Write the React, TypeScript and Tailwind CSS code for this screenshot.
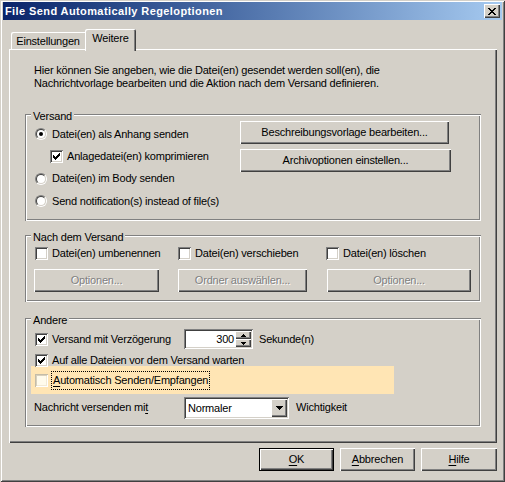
import type { ReactNode } from "react";

const RAISED =
  "shadow-[inset_1px_1px_0_#ffffff,inset_-1px_-1px_0_#404040,inset_-2px_-2px_0_#808080]";
const SUNKEN =
  "shadow-[inset_1px_1px_0_#808080,inset_-1px_-1px_0_#ffffff,inset_2px_2px_0_#404040,inset_-2px_-2px_0_#d4d0c8]";
const ETCHED =
  "shadow-[inset_1px_1px_0_#808080,inset_-1px_-1px_0_#ffffff,inset_2px_2px_0_#ffffff,inset_-2px_-2px_0_#808080]";

function CheckMark() {
  // classic 7x7 tick, three pixels tall per column
  const cols = [2, 3, 4, 3, 2, 1, 0];
  return (
    <svg width="13" height="13" viewBox="0 0 13 13" shapeRendering="crispEdges" className="absolute inset-0">
      {cols.map((y, i) => (
        <rect key={i} x={3 + i} y={3 + y} width="1" height="3" fill="#000" />
      ))}
    </svg>
  );
}

function Check({ checked, light }: { checked?: boolean; light?: boolean }) {
  return (
    <span
      className={
        "relative shrink-0 size-[13px] " +
        (light
          ? "bg-[#fffbec] shadow-[inset_1px_1px_0_#c4bca8,inset_-1px_-1px_0_#ffffff,inset_2px_2px_0_#d8d0bc,inset_-2px_-2px_0_#f2ead6]"
          : "bg-white " + SUNKEN)
      }
    >
      {checked && <CheckMark />}
    </span>
  );
}

function Radio({ checked }: { checked?: boolean }) {
  return (
    <span className="shrink-0 size-[12px] rounded-full border border-t-[#808080] border-l-[#808080] border-r-white border-b-white">
      <span className="size-full rounded-full border border-t-[#404040] border-l-[#404040] border-r-[#d4d0c8] border-b-[#d4d0c8] bg-white flex items-center justify-center">
        {checked && <span className="size-[4px] rounded-full bg-black" />}
      </span>
    </span>
  );
}

function Btn({
  children,
  className = "",
  disabled,
  primary,
}: {
  children: ReactNode;
  className?: string;
  disabled?: boolean;
  primary?: boolean;
}) {
  return (
    <div
      className={
        "flex items-center justify-center bg-[#d4d0c8] " +
        RAISED +
        " " +
        (primary ? "border border-black " : "") +
        (disabled ? "text-[#808080] [text-shadow:1px_1px_0_#ffffff] " : "text-black ") +
        className
      }
    >
      {children}
    </div>
  );
}

function Group({ label, className = "", children }: { label: string; className?: string; children: ReactNode }) {
  return (
    <div className={"relative " + ETCHED + " " + className}>
      <span className="absolute top-[-4px] left-[6px] px-[2px] bg-[#d4d0c8] leading-[13px]">{label}</span>
      {children}
    </div>
  );
}

function Ul({ children }: { children: ReactNode }) {
  return <span className="underline underline-offset-[2px]">{children}</span>;
}

export default function App() {
  return (
    <div className="w-[505px] h-[482px] overflow-hidden bg-[#d4d0c8] pt-[2px] px-[3px] font-['Liberation_Sans',Arial,sans-serif] text-[11px] leading-[13px] tracking-[-0.2px] text-black shadow-[inset_1px_1px_0_#d4d0c8,inset_-1px_-1px_0_#404040,inset_2px_2px_0_#ffffff,inset_-2px_-2px_0_#808080]">
      {/* title bar */}
      <div className="h-[18px] bg-linear-to-r from-[#0a246a] to-[#a6caf0] flex items-center justify-between pl-[2px] pr-[2px]">
        <span className="text-white font-bold text-[11px] tracking-[0.4px]">File Send Automatically Regeloptionen</span>
        <div className={"w-[16px] h-[14px] bg-[#d4d0c8] flex items-center justify-center " + RAISED}>
          <svg width="8" height="7" viewBox="0 0 8 7" shapeRendering="crispEdges">
            <path
              d="M0 0h2v1H0zM6 0h2v1H6zM1 1h2v1H1zM5 1h2v1H5zM2 2h4v1H2zM3 3h2v1H3zM2 4h4v1H2zM1 5h2v1H1zM5 5h2v1H5zM0 6h2v1H0zM6 6h2v1H6z"
              fill="#000"
            />
          </svg>
        </div>
      </div>

      {/* tabs */}
      <div className="mt-[9px] ml-[6px] pl-[2px] h-[20px] flex items-end">
        <div className="w-[74px] h-[17px] rounded-tl-[2px] shadow-[inset_1px_1px_0_#ffffff] flex items-center justify-center pt-[1px]">
          Einstellungen
        </div>
        <div className="relative z-10 -mb-[2px] w-[51px] h-[22px] bg-[#d4d0c8] rounded-tl-[2px] rounded-tr-[2px] shadow-[inset_1px_1px_0_#ffffff,inset_-1px_0_0_#404040,inset_-2px_0_0_#808080] flex justify-center pt-[3px]">
          Weitere
        </div>
      </div>

      {/* tab page */}
      <div className={"ml-[6px] w-[488px] h-[394px] " + RAISED}>
        <p className="pt-[15px] pl-[25px]">
          Hier können Sie angeben, wie die Datei(en) gesendet werden soll(en), die
          <br />
          Nachrichtvorlage bearbeiten und die Aktion nach dem Versand definieren.
        </p>

        <div className="mx-[16px]">
          <Group label="Versand" className="mt-[24px] h-[107px]">
            <div className="flex pt-[7px] pl-[10px]">
              <div className="w-[205px] pt-[2px] flex flex-col">
                <div className="h-[22px] flex items-center gap-[5px]">
                  <Radio checked />
                  Datei(en) als Anhang senden
                </div>
                <div className="h-[22px] flex items-center gap-[4px] pl-[15px]">
                  <Check checked />
                  Anlagedatei(en) komprimieren
                </div>
                <div className="h-[23px] flex items-center gap-[5px]">
                  <Radio />
                  Datei(en) im Body senden
                </div>
                <div className="h-[22px] flex items-center gap-[5px]">
                  <Radio />
                  Send notification(s) instead of file(s)
                </div>
              </div>
              <div className="flex flex-col gap-[5px]">
                <Btn className="w-[209px] h-[23px]">Beschreibungsvorlage bearbeiten...</Btn>
                <Btn className="w-[211px] h-[23px]">Archivoptionen einstellen...</Btn>
              </div>
            </div>
          </Group>

          <Group label="Nach dem Versand" className="mt-[14px] h-[67px]">
            <div className="flex pl-[9px] pt-[8px]">
              <div className="w-[144px] flex flex-col">
                <div className="h-[20px] flex items-center gap-[4px] pl-[1px]">
                  <Check />
                  Datei(en) umbenennen
                </div>
                <Btn disabled className="mt-[6px] w-[125px] h-[23px]">
                  Optionen...
                </Btn>
              </div>
              <div className="w-[148px] flex flex-col">
                <div className="h-[20px] flex items-center gap-[4px]">
                  <Check />
                  Datei(en) verschieben
                </div>
                <Btn disabled className="mt-[6px] w-[129px] h-[23px]">
                  Ordner auswählen...
                </Btn>
              </div>
              <div className="flex flex-col">
                <div className="h-[20px] flex items-center gap-[4px]">
                  <Check />
                  Datei(en) löschen
                </div>
                <Btn disabled className="mt-[6px] ml-[1px] w-[144px] h-[23px]">
                  Optionen...
                </Btn>
              </div>
            </div>
          </Group>

          <Group label="Andere" className="mt-[16px] h-[109px]">
            <div className="pt-[10px] flex flex-col">
              <div className="h-[22px] flex items-center pl-[10px]">
                <div className="w-[149px] flex items-center gap-[4px]">
                  <Check checked />
                  Versand mit Verzögerung
                </div>
                <div className={"w-[69px] h-[20px] bg-white flex p-[2px] " + SUNKEN}>
                  <div className="flex-1 text-right pr-[1px] leading-[16px]">300</div>
                  <div className="w-[16px] flex flex-col">
                    <div className={"h-[8px] bg-[#d4d0c8] flex items-center justify-center " + RAISED}>
                      <svg width="5" height="3" viewBox="0 0 5 3" shapeRendering="crispEdges">
                        <path d="M2 0h1v1H2zM1 1h3v1H1zM0 2h5v1H0z" fill="#000" />
                      </svg>
                    </div>
                    <div className={"h-[8px] bg-[#d4d0c8] flex items-center justify-center " + RAISED}>
                      <svg width="5" height="3" viewBox="0 0 5 3" shapeRendering="crispEdges">
                        <path d="M0 0h5v1H0zM1 1h3v1H1zM2 2h1v1H2z" fill="#000" />
                      </svg>
                    </div>
                  </div>
                </div>
                <span className="ml-[6px]">Sekunde(n)</span>
              </div>
              <div className="h-[20px] flex items-center gap-[4px] pl-[10px]">
                <Check checked />
                Auf alle Dateien vor dem Versand warten
              </div>
              <div className="-mt-[4px] ml-[6px] w-[363px] h-[28px] bg-[#ffe5b4] flex items-center pl-[4px] gap-[3px]">
                <Check light />
                <span className="h-[19px] flex items-center px-[1px] border border-dotted border-black">
                  <Ul>A</Ul>utomatisch Senden/Empfangen
                </span>
              </div>
              <div className="mt-[2px] h-[23px] flex items-center pl-[9px]">
                <span className="w-[150px]">
                  Nachricht versenden mi<Ul>t</Ul>
                </span>
                <div className={"w-[105px] h-[22px] bg-white flex p-[2px] " + SUNKEN}>
                  <div className="flex-1 pl-[2px] leading-[18px]">Normaler</div>
                  <div className={"w-[16px] bg-[#d4d0c8] flex items-center justify-center " + RAISED}>
                    <svg width="7" height="4" viewBox="0 0 7 4" shapeRendering="crispEdges">
                      <path d="M0 0h7v1H0zM1 1h5v1H1zM2 2h3v1H2zM3 3h1v1H3z" fill="#000" />
                    </svg>
                  </div>
                </div>
                <span className="ml-[7px]">Wichtigkeit</span>
              </div>
            </div>
          </Group>
        </div>
      </div>

      {/* dialog buttons */}
      <div className="mt-[5px] flex justify-end gap-[6px] pr-[5px]">
        <Btn primary className="w-[75px] h-[23px]">
          <Ul>O</Ul>K
        </Btn>
        <Btn className="w-[75px] h-[23px]">
          <Ul>A</Ul>bbrechen
        </Btn>
        <Btn className="w-[76px] h-[23px]">
          <Ul>H</Ul>ilfe
        </Btn>
      </div>
    </div>
  );
}
